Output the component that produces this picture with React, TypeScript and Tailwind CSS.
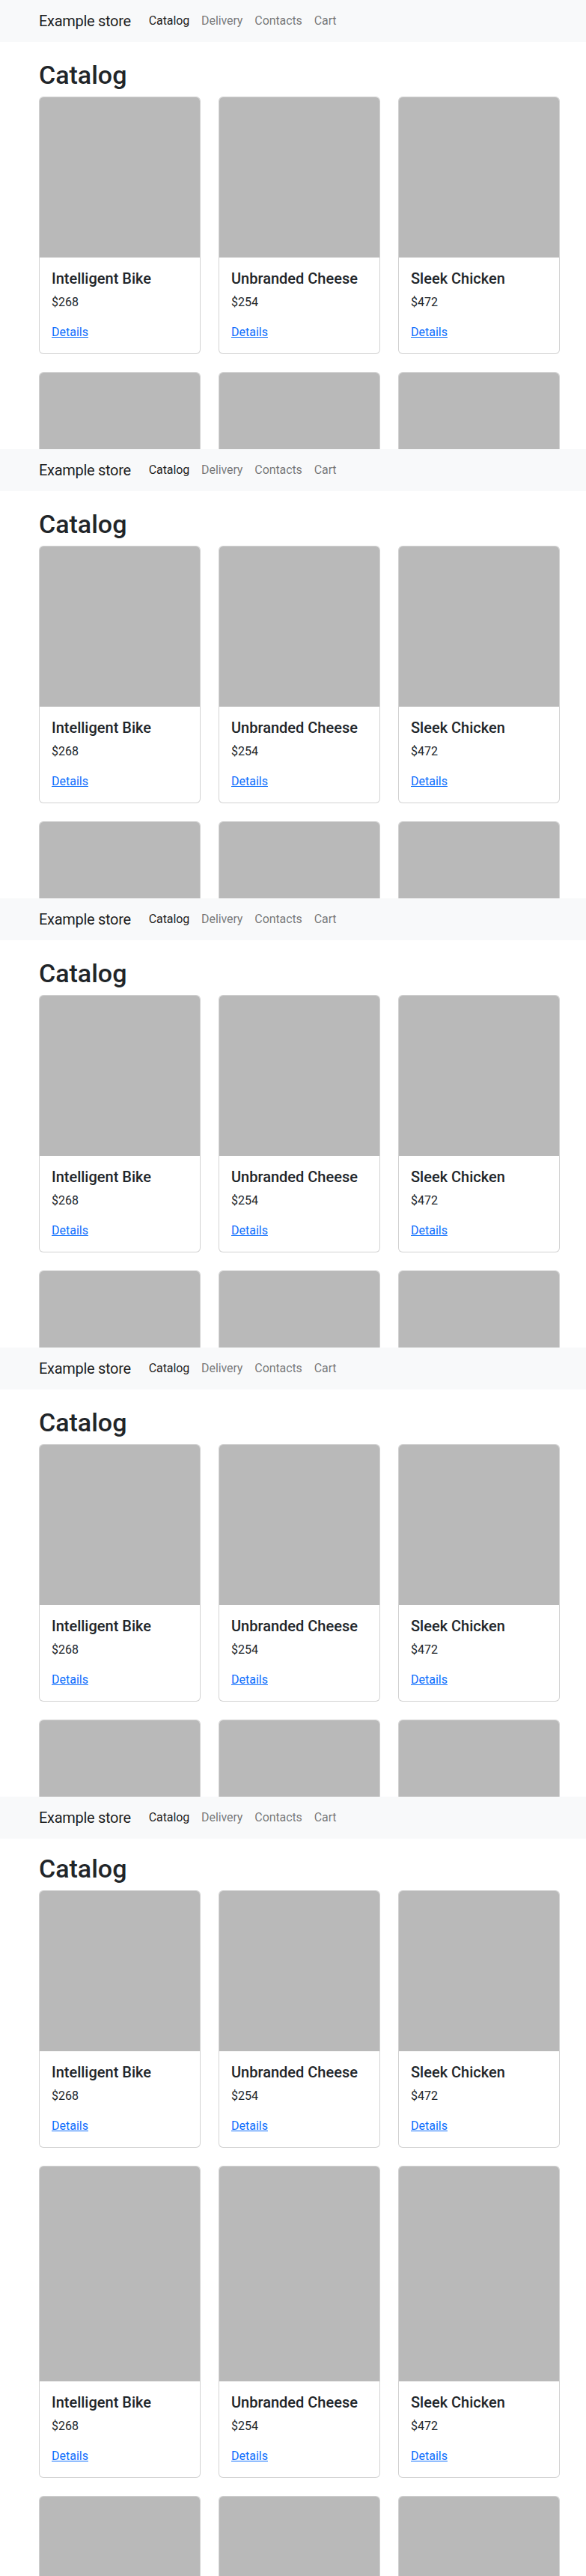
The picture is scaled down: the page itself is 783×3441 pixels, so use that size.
import React from "react";

const products = [
  { name: "Intelligent Bike", price: "$268" },
  { name: "Unbranded Cheese", price: "$254" },
  { name: "Sleek Chicken", price: "$472" },
];

function Navbar() {
  return (
    <nav className="bg-[#f8f9fa] py-2">
      <div className="ml-[52px] w-[696px] flex items-center">
        <a className="py-[5px] mr-4 text-[20px] leading-[30px] text-black/90 tracking-[-0.3px]">Example store</a>
        <ul className="flex tracking-[-0.1px]">
          <li><a className="block px-2 py-2 text-base leading-6 text-black/90">Catalog</a></li>
          <li><a className="block px-2 py-2 text-base leading-6 text-black/55">Delivery</a></li>
          <li><a className="block px-2 py-2 text-base leading-6 text-black/55">Contacts</a></li>
          <li><a className="block px-2 py-2 text-base leading-6 text-black/55">Cart</a></li>
        </ul>
      </div>
    </nav>
  );
}

function Card({ name, price, imgClass }: { name: string; price: string; imgClass: string }) {
  return (
    <div className="flex flex-col border border-black/[0.175] rounded-[6px] overflow-hidden bg-white">
      <div className={`${imgClass} bg-[#b9b9b9]`} />
      <div className="p-4">
        <h5 className="text-[20px] leading-6 font-medium text-[#212529] mb-2">{name}</h5>
        <p className="text-base leading-6 text-[#212529] mb-4">{price}</p>
        <a className="text-base leading-6 text-[#0d6efd] underline">Details</a>
      </div>
    </div>
  );
}

function Section({ last }: { last?: boolean }) {
  return (
    <div className={last ? "h-[1041px] overflow-hidden" : "h-[600px] overflow-hidden"}>
      <Navbar />
      <main className={last ? "ml-[52px] w-[696px] pt-5" : "ml-[52px] w-[696px] pt-6"}>
        <h1 className="text-[34px] leading-[40.8px] font-medium text-[#212529] mb-2">Catalog</h1>
        <div className="flex flex-col gap-6">
          <div className="grid grid-cols-3 gap-6">
            {products.map((p) => (
              <Card key={p.name} {...p} imgClass="h-[214px]" />
            ))}
          </div>
          <div className="grid grid-cols-3 gap-6">
            {products.map((p) => (
              <Card key={p.name} {...p} imgClass="h-[287px]" />
            ))}
          </div>
          <div className="grid grid-cols-3 gap-6">
            {products.map((p) => (
              <Card key={p.name} {...p} imgClass="h-[287px]" />
            ))}
          </div>
        </div>
      </main>
    </div>
  );
}

export default function App() {
  return (
    <div className="bg-white w-[783px] overflow-hidden" style={{ fontFamily: "Roboto, 'Liberation Sans', sans-serif" }}>
      <Section />
      <Section />
      <Section />
      <Section />
      <Section last />
    </div>
  );
}
